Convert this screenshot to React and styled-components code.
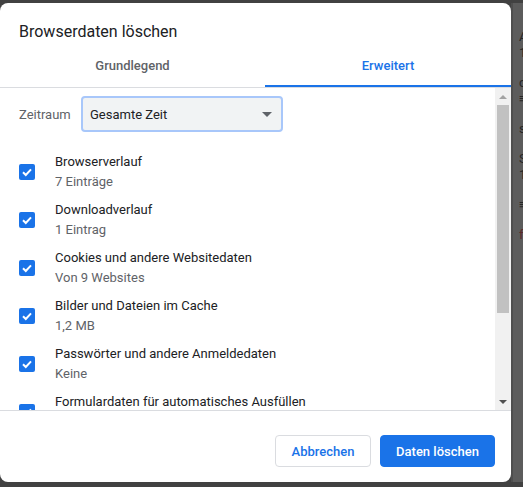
import styled, { createGlobalStyle } from 'styled-components'

const Global = createGlobalStyle`
    html, body {
        margin: 0;
        padding: 0;
        background: #414141;
    }
    * {
        box-sizing: border-box;
    }
`

const S = {}

S.Backdrop = styled.div`
    height: 487px;
    padding-top: 3px;
    display: flex;
    align-items: flex-start;
    font-family: Roboto, "Liberation Sans", sans-serif;
`
S.Dialog = styled.div`
    width: 511px;
    height: 479px;
    background: #fff;
    border-radius: 8px;
    display: flex;
    flex-direction: column;
    overflow: hidden;
    flex-shrink: 0;
`
S.Side = styled.div`
    flex: 1;
    height: 479px;
    background: #5c5c5c;
    border-left: 2px solid #4e4e4e;
    display: flex;
    flex-direction: column;
    padding: 26px 0 0 6px;
    gap: 14px;
    overflow: hidden;
`
S.SideGlyph = styled.div`
    font-size: 13px;
    line-height: 16px;
    color: ${p => p.red ? '#5a2a2a' : '#262626'};
`
S.Title = styled.div`
    padding: 18px 19px 0;
    height: 40px;
    font-size: 16px;
    line-height: 22px;
    color: #202124;
`
S.Tabs = styled.div`
    display: flex;
    border-bottom: 1px solid #dadce0;
`
S.Tab = styled.div`
    width: ${p => p.w};
    flex: ${p => p.w ? 'none' : 1};
    height: 44px;
    padding-top: 2px;
    display: flex;
    align-items: center;
    justify-content: center;
    font-size: 13px;
    font-weight: 500;
    color: ${p => p.active ? '#1a73e8' : '#5f6368'};
    border-bottom: 2px solid ${p => p.active ? '#1a73e8' : 'transparent'};
`
S.Body = styled.div`
    height: 322px;
    display: flex;
`
S.Scroll = styled.div`
    flex: 1;
    overflow: hidden;
    padding: 8px 0 0 19px;
`
S.RangeRow = styled.div`
    display: flex;
    align-items: center;
    margin-bottom: 16px;
`
S.RangeLabel = styled.div`
    width: 62px;
    font-size: 13px;
    color: #5f6368;
`
S.Select = styled.div`
    width: 202px;
    height: 36px;
    border: 2px solid #a8c7fa;
    border-radius: 4px;
    background: #f1f3f4;
    display: flex;
    align-items: center;
    justify-content: space-between;
    padding: 0 9px 0 7px;
    font-size: 13px;
    color: #202124;
`
S.Arrow = styled.span`
    width: 0;
    height: 0;
    border-left: 5px solid transparent;
    border-right: 5px solid transparent;
    border-top: 5px solid #5f6368;
`
S.Item = styled.div`
    height: 48px;
    padding: 4px 0;
    display: flex;
    align-items: center;
    gap: 20px;
`
S.Box = styled.span`
    width: 16px;
    height: 16px;
    border-radius: 2px;
    background: #1a73e8;
    display: flex;
    align-items: center;
    justify-content: center;
    flex-shrink: 0;
`
S.Texts = styled.div`
    height: 40px;
    display: flex;
    flex-direction: column;
`
S.Label = styled.div`
    font-size: 13px;
    line-height: 20px;
    color: #202124;
`
S.Sub = styled.div`
    font-size: 13px;
    line-height: 20px;
    color: #5f6368;
`
S.Bar = styled.div`
    width: 16px;
    background: #f1f1f1;
    display: flex;
    flex-direction: column;
    align-items: center;
`
S.BarButton = styled.div`
    height: 17px;
    display: flex;
    align-items: center;
    justify-content: center;
`
S.Tri = styled.span`
    width: 0;
    height: 0;
    border-left: 4px solid transparent;
    border-right: 4px solid transparent;
    ${p => p.up ? 'border-bottom: 4px solid #a3a3a3;' : 'border-top: 4px solid #505050;'}
`
S.Track = styled.div`
    flex: 1;
    width: 100%;
    padding: 0 2px;
`
S.Thumb = styled.div`
    height: 208px;
    background: #c1c1c1;
`
S.Footer = styled.div`
    flex: 1;
    border-top: 1px solid #dadce0;
    display: flex;
    justify-content: flex-end;
    align-items: flex-start;
    gap: 9px;
    padding: 24px 16px 0 0;
`
S.Button = styled.button`
    height: 32px;
    width: ${p => p.w};
    border-radius: 4px;
    font-family: inherit;
    font-size: 13px;
    font-weight: 500;
    border: 1px solid ${p => p.primary ? '#1a73e8' : '#dadce0'};
    background: ${p => p.primary ? '#1a73e8' : '#fff'};
    color: ${p => p.primary ? '#fff' : '#1a73e8'};
    padding: 0;
`

const items = [
    ['Browserverlauf', '7 Einträge'],
    ['Downloadverlauf', '1 Eintrag'],
    ['Cookies und andere Websitedaten', 'Von 9 Websites'],
    ['Bilder und Dateien im Cache', '1,2 MB'],
    ['Passwörter und andere Anmeldedaten', 'Keine'],
    ['Formulardaten für automatisches Ausfüllen', ''],
]

const Check = () => (
    <svg width="12" height="12" viewBox="0 0 12 12">
        <path d="M2 6.2 L4.8 9 L10 3.4" fill="none" stroke="#fff" strokeWidth="2" />
    </svg>
)

const App = () => {
    return (
        <>
            <Global />
            <S.Backdrop>
                <S.Dialog>
                    <S.Title>Browserdaten löschen</S.Title>
                    <S.Tabs>
                        <S.Tab w="265px">Grundlegend</S.Tab>
                        <S.Tab active>Erweitert</S.Tab>
                    </S.Tabs>

                    <S.Body>
                        <S.Scroll>
                            <S.RangeRow>
                                <S.RangeLabel>Zeitraum</S.RangeLabel>
                                <S.Select>
                                    Gesamte Zeit
                                    <S.Arrow />
                                </S.Select>
                            </S.RangeRow>
                            {items.map(([label, sub]) => (
                                <S.Item key={label}>
                                    <S.Box><Check /></S.Box>
                                    <S.Texts>
                                        <S.Label>{label}</S.Label>
                                        {sub && <S.Sub>{sub}</S.Sub>}
                                    </S.Texts>
                                </S.Item>
                            ))}
                        </S.Scroll>
                        <S.Bar>
                            <S.BarButton><S.Tri up /></S.BarButton>
                            <S.Track><S.Thumb /></S.Track>
                            <S.BarButton><S.Tri /></S.BarButton>
                        </S.Bar>
                    </S.Body>

                    <S.Footer>
                        <S.Button w="96px">Abbrechen</S.Button>
                        <S.Button w="115px" primary>Daten löschen</S.Button>
                    </S.Footer>
                </S.Dialog>

                <S.Side>
                    <S.SideGlyph>A<br />1</S.SideGlyph>
                    <S.SideGlyph>c<br />≡</S.SideGlyph>
                    <S.SideGlyph>s</S.SideGlyph>
                    <S.SideGlyph>S<br />1</S.SideGlyph>
                    <S.SideGlyph>≡</S.SideGlyph>
                    <S.SideGlyph red>f</S.SideGlyph>
                </S.Side>
            </S.Backdrop>
        </>
    )
}

export default App
